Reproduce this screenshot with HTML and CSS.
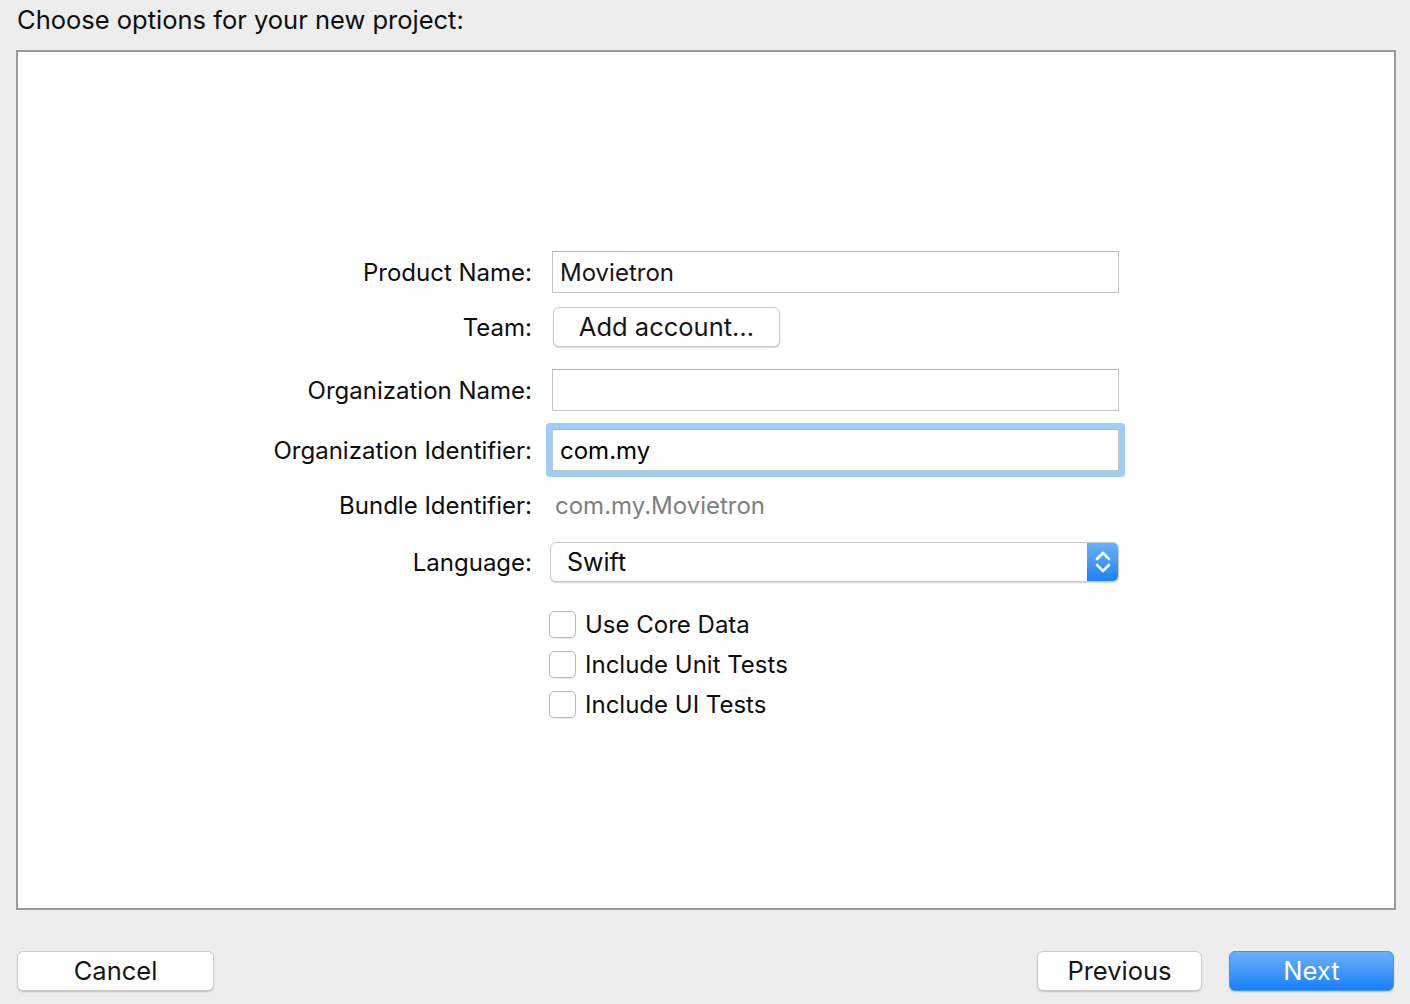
FILE: index.html
```html
<!DOCTYPE html>
<html>
<head>
<meta charset="utf-8">
<link rel="stylesheet" href="styles.css">
</head>
<body>
<div class="page">
  <div class="title">Choose options for your new project:</div>
  <div class="panel">
    <div class="form">
      <div class="row r1">
        <div class="label">Product Name:</div>
        <div class="control"><div class="field">Movietron</div></div>
      </div>
      <div class="row r2">
        <div class="label">Team:</div>
        <div class="control"><div class="btn team-btn">Add account…</div></div>
      </div>
      <div class="row r3">
        <div class="label">Organization Name:</div>
        <div class="control"><div class="field"></div></div>
      </div>
      <div class="row r4">
        <div class="label">Organization Identifier:</div>
        <div class="control"><div class="field focused">com.my</div></div>
      </div>
      <div class="row r5">
        <div class="label">Bundle Identifier:</div>
        <div class="control"><div class="static">com.my.Movietron</div></div>
      </div>
      <div class="row r6">
        <div class="label">Language:</div>
        <div class="control">
          <div class="popup">
            <span class="popup-text">Swift</span>
            <span class="popup-arrows">
              <svg width="32" height="40" viewBox="0 0 32 40">
                <path d="M10 17 L16 11 L22 17" fill="none" stroke="#fff" stroke-width="2.6" stroke-linecap="round" stroke-linejoin="round"/>
                <path d="M10 23 L16 29 L22 23" fill="none" stroke="#fff" stroke-width="2.6" stroke-linecap="round" stroke-linejoin="round"/>
              </svg>
            </span>
          </div>
        </div>
      </div>
      <div class="row r7 check-row">
        <div class="label"></div>
        <div class="control"><span class="checkbox"></span><span class="check-label">Use Core Data</span></div>
      </div>
      <div class="row r8 check-row">
        <div class="label"></div>
        <div class="control"><span class="checkbox"></span><span class="check-label">Include Unit Tests</span></div>
      </div>
      <div class="row r9 check-row">
        <div class="label"></div>
        <div class="control"><span class="checkbox"></span><span class="check-label">Include UI Tests</span></div>
      </div>
    </div>
  </div>
  <div class="footer">
    <div class="btn cancel">Cancel</div>
    <div class="spacer"></div>
    <div class="btn prev">Previous</div>
    <div class="btn next">Next</div>
  </div>
</div>
</body>
</html>
```

FILE: styles.css
```css
* { box-sizing: border-box; }
html, body {
  margin: 0;
  padding: 0;
  background: #ededed;
}
body {
  font-family: "Inter", "Liberation Sans", sans-serif;
  font-size: 24px;
  color: #161616;
  width: 1410px;
  height: 1004px;
  overflow: hidden;
}
.page {
  display: flex;
  flex-direction: column;
}
.title {
  height: 50px;
  padding-left: 17px;
  line-height: 39px;
  font-size: 25.5px;
  color: #0e0e0e;
}
.panel {
  margin-left: 16px;
  width: 1380px;
  height: 860px;
  background: #fff;
  border: 2px solid #9b9b9b;
  padding-top: 199px;
}
.form {
  display: flex;
  flex-direction: column;
}
.row {
  display: grid;
  grid-template-columns: 514px 1fr;
  column-gap: 20px;
  align-items: center;
}
.label {
  text-align: right;
  color: #0e0e0e;
  padding-top: 1px;
}
.control {
  display: flex;
  align-items: center;
}
.r1 { height: 42px; }
.r2 { height: 40px; margin-top: 14px; }
.r3 { height: 42px; margin-top: 22px; }
.r4 { height: 42px; margin-top: 18px; }
.r5 { height: 34px; margin-top: 18px; }
.r6 { height: 40px; margin-top: 19px; }
.r7 { height: 27px; margin-top: 28px; }
.r8 { height: 27px; margin-top: 13px; }
.r9 { height: 27px; margin-top: 13px; }
.r5 .label { padding-top: 0; margin-top: -1px; }

.field {
  width: 567px;
  height: 42px;
  border: 1px solid #c4c4c4;
  border-top-color: #b3b3b3;
  background: #fff;
  padding-left: 7px;
  padding-top: 1px;
  line-height: 40px;
  color: #161616;
}
.field.focused {
  color: #000;
  box-shadow: 0 0 0 6px #a0ccf8;
  border-radius: 1px;
}
.btn {
  background: #fff;
  border: 1px solid #cbcbcb;
  border-radius: 6px;
  box-shadow: 0 1px 1.5px rgba(0,0,0,0.18);
  text-align: center;
  color: #161616;
  font-size: 25.5px;
}
.team-btn {
  margin-left: 1px;
  width: 227px;
  height: 40px;
  line-height: 38px;
}
.static {
  margin-left: 3px;
  color: #7f7f7f;
  margin-top: -1px;
}
.popup {
  margin-left: -2px;
  width: 569px;
  height: 40px;
  display: flex;
  align-items: center;
  background: #fff;
  border: 1px solid #cbcbcb;
  border-radius: 6px;
  box-shadow: 0 1px 1.5px rgba(0,0,0,0.18);
  overflow: hidden;
}
.popup-text {
  flex: 1;
  padding-left: 16px;
  font-size: 25px;
  color: #0e0e0e;
}
.popup-arrows {
  width: 32px;
  height: 40px;
  margin-right: -1px;
  margin-top: -1px;
  margin-bottom: -1px;
  display: flex;
  background: linear-gradient(#6cb2f9, #1a80fb);
}
.checkbox {
  margin-left: -3px;
  width: 27px;
  height: 27px;
  border: 1px solid #b8b8b8;
  border-radius: 5px;
  background: #fff;
  box-shadow: 0 1px 1px rgba(0,0,0,0.08);
}
.check-label {
  margin-left: 9px;
  color: #0e0e0e;
}
.footer {
  display: flex;
  margin-top: 41px;
  padding-left: 17px;
  padding-right: 16px;
}
.spacer { flex: 1; }
.footer .btn {
  height: 40px;
  line-height: 38px;
}
.cancel { width: 197px; }
.prev { width: 165px; }
.next {
  width: 165px;
  margin-left: 27px;
  color: #fff;
  border-color: #3c93f9;
  background: linear-gradient(#6bb1f8, #1a7ffb);
}
```
